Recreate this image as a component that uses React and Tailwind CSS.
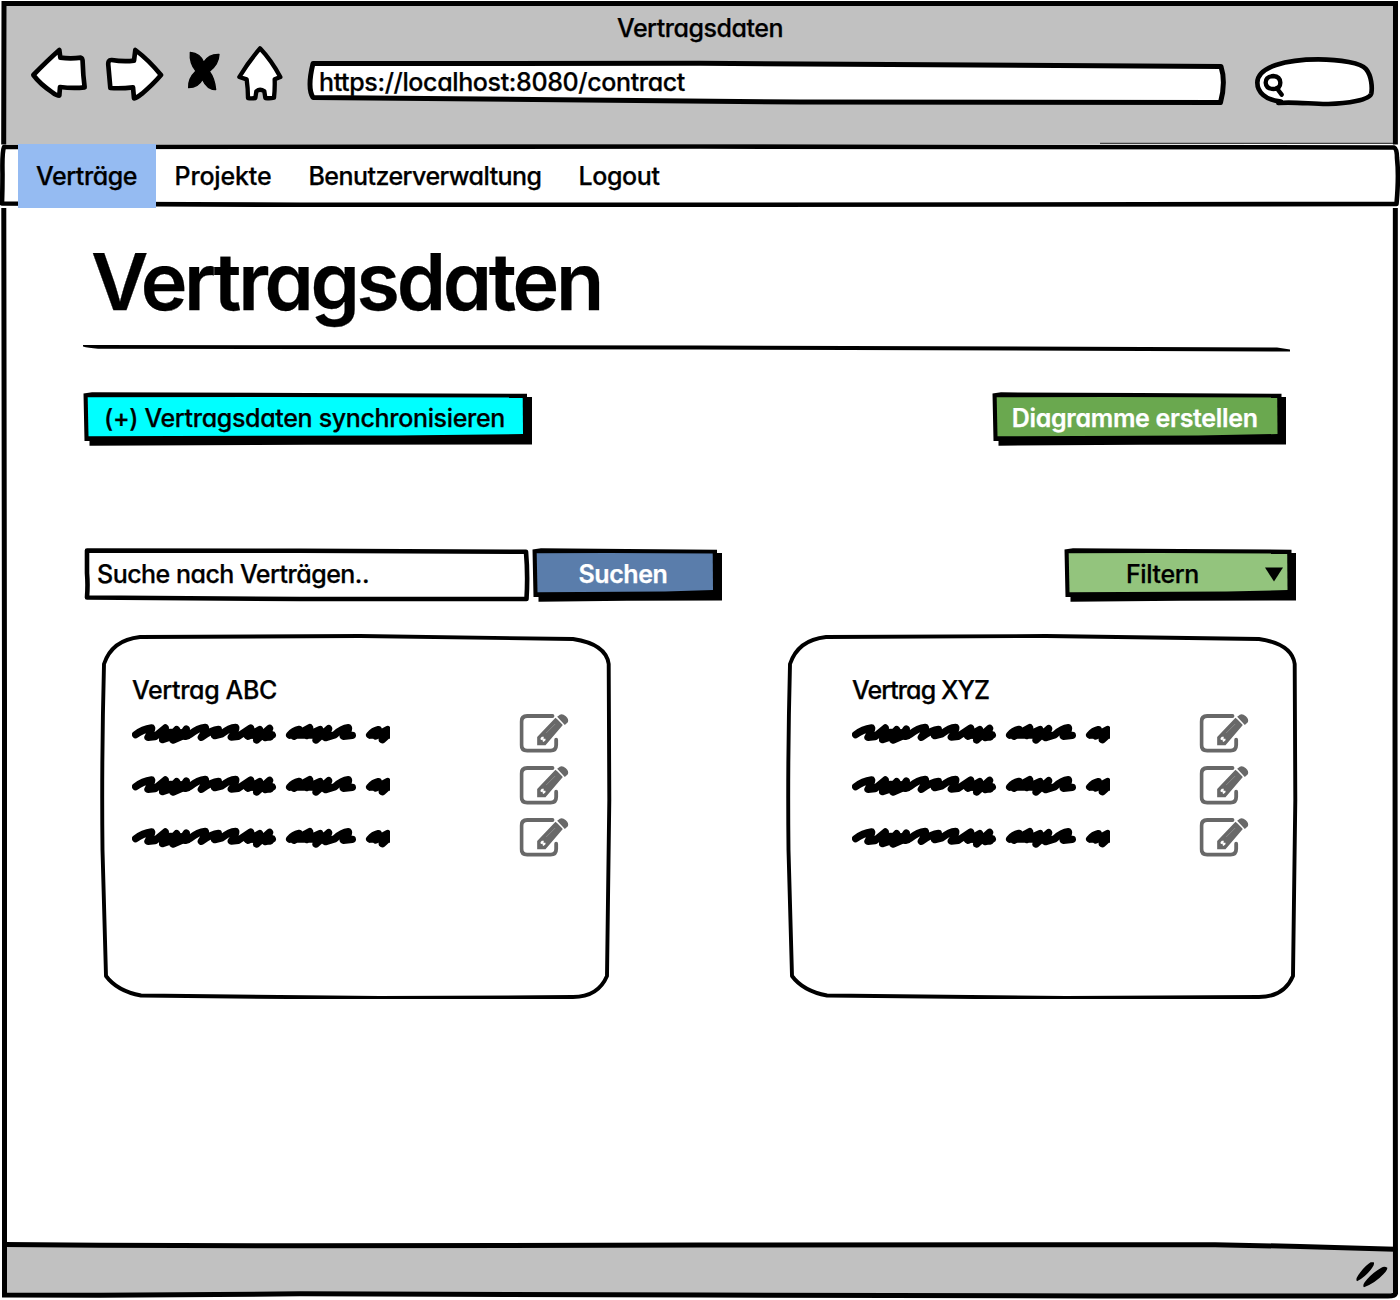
import { useLayoutEffect, useRef, useState } from "react";

/* Text whose tracking is computed so that it spans a given width. */
function Label({ width, className = "", children }) {
  const ref = useRef(null);
  const [tracking, setTracking] = useState(0);
  useLayoutEffect(() => {
    const natural = ref.current.getBoundingClientRect().width;
    setTracking((width - natural) / children.length);
  }, []);
  return (
    <span
      ref={ref}
      className={`inline-block whitespace-pre ${className}`}
      style={{ letterSpacing: `${tracking}px` }}
    >
      {children}
    </span>
  );
}

const ink = { fill: "none", stroke: "#000", strokeLinejoin: "round", strokeLinecap: "round" };

function WindowFrame() {
  return (
    <svg className="absolute inset-0 h-full w-full" viewBox="0 0 1400 1300">
      <path d="M4 3.5H1395V1295L1100 1295.5L700 1294.5L300 1293.5L100 1295.5L4.500 1295.500Z" fill="#fff" />
      <path d="M4 3.5H1395V144H4Z" fill="#c1c1c1" />
      <path d="M5 1244.500L300 1246L700 1245L1200 1244.500L1395 1249V1295H5Z" fill="#c1c1c1" />
      <path d="M4 3.500H1395.500L1395 700L1395.500 1293.500Q1395 1296 1388 1296L1100 1296L700 1295L300 1293.800L100 1295.300L4.500 1295L4.500 700L3.700 140Z" {...ink} strokeWidth="5" strokeLinejoin="miter" />
      <path d="M5 1244.500L100 1245.300L300 1245.800L700 1245L1215 1244.700L1300 1246.500L1395 1249.300" {...ink} strokeWidth="5" />
      <path d="M1100 143.300H1393" stroke="#222" />
    </svg>
  );
}

function NavFrame() {
  return (
    <svg className="absolute inset-0 h-full w-full" viewBox="0 0 1400 64">
      <path d="M0 0.500H1400V64H0Z" fill="#fff" />
      <path d="M4 3L700 2.500L1394 3.500Q1397 5 1397 14Q1399 32 1396.500 60L700 60.800L300 60.800L2 59.500Q2.500 45 2.500 30Q2 8 4 3Z" {...ink} strokeWidth="4.600" />
    </svg>
  );
}

function BackIcon() {
  return (
    <svg className="h-14 w-[58px]" viewBox="90 138 174 168">
      <path d="M100 225Q142 182 178 150L181 173Q212 177 243 173Q248 174 248 187Q249 225 254 262Q220 266 180 261L178 287Q170 287 157 277Q120 252 100 225Z" {...ink} fill="#fff" strokeWidth="14" />
    </svg>
  );
}

function ForwardIcon() {
  return (
    <svg className="h-14 w-[60px]" viewBox="312 138 180 168">
      <path d="M483 225Q446 180 406 150L402 182Q370 186 335 180Q323 179 325 196Q328 230 331 264Q364 266 399 262L402 295Q410 294 426 281Q460 252 483 225Z" {...ink} fill="#fff" strokeWidth="14" />
    </svg>
  );
}

function StopIcon() {
  return (
    <svg className="h-14 w-9" viewBox="558 138 108 168">
      <path d="M571 157Q601 160 611 187Q626 162 657 163Q656 194 628 214Q644 235 647 269Q622 270 607 238Q595 262 566 263Q564 236 588 213Q568 190 571 157Z" stroke="#000" strokeWidth="4" strokeLinejoin="round" />
    </svg>
  );
}

function HomeIcon() {
  return (
    <svg className="h-14 w-12" viewBox="708 138 144 168">
      <path d="M780 145Q814 181 841 231L824 238Q825 266 822 293Q810 296 796 294L793 274Q780 264 769 274L766 294Q755 296 744 294Q744 266 740 238L718 231Q745 186 780 145Z" {...ink} fill="#fff" strokeWidth="13" />
    </svg>
  );
}

function SearchPill() {
  return (
    <svg className="mt-2.5 h-[52px] w-[124px]" viewBox="219 168 372 156">
      <path d="M303 305C255 300 232 275 232 248C232 200 320 178 415 178C480 178 545 190 558 207C575 228 577 262 574 280C570 300 500 311 445 312C400 313 340 304 295 309" {...ink} fill="#fff" strokeWidth="14" />
      <path d="M280 228Q300 229 301 248Q301 266 281 267Q258 267 257 248Q257 229 280 228ZM290 264L305 284" {...ink} strokeWidth="13" />
    </svg>
  );
}

function SketchButton({ width, fill, className = "", children }) {
  const w = width;
  return (
    <button className={`relative flex h-[54px] items-center justify-center ${className}`}>
      <svg className="absolute inset-0 h-full w-full" viewBox={`0 0 ${w} 54`} preserveAspectRatio="none">
        <path d={`M0.500 1.500L9 0.300L${w * 0.5} 1L${w - 5} 1.700V5H${w}V52.500L${w * 0.5} 52.800L6.500 53.700V49H1.500Z`} />
        <path d={`M4.700 5.200L${w * 0.4} 5L${w - 9.300} 5.600L${w - 9} 42L${w * 0.7} 43.500L5.500 44.200Z`} fill={fill} />
      </svg>
      {children}
    </button>
  );
}

function Scribble() {
  return (
    <svg className="mt-[3px] h-[22px] w-[258px]" viewBox="126 310 774 66">
      <g {...ink} strokeWidth="22">
        <path d="M137 345Q158 329 185 325Q187 330 174 353L195 351L226 325L218 360L240 352L260 330L249 361L275 350L289 328L286 350L300 344Q324 325 346 323Q349 330 334 353Q365 330 385 329L374 348L395 343Q418 324 437 323Q440 331 424 352L445 350L482 325L474 350L509 330L500 361L539 326L526 354L547 346" />
        <path d="M215 348H292M470 345L540 352M485 338L535 342M240 338L285 340" />
        <path d="M599 346Q610 332 627 329L612 350L659 324L650 348L690 330L678 361L716 327L706 354L735 345Q755 326 775 324Q779 332 760 350L787 347M605 346H715M655 336L712 340" />
        <path d="M839 346Q850 333 865 330L857 349L892 330L877 360L910 330V348M845 346H900M865 338H900" />
      </g>
    </svg>
  );
}

function EditIcon() {
  return (
    <svg className="mt-0.5 h-10 w-[50px] translate-x-[0.5px]" viewBox="118 278 150 120">
      <path d="M217 287H141Q124 287 124 304V374Q124 391 141 391H211Q228 391 228 374V358" fill="none" stroke="#686868" strokeWidth="11.500" strokeLinecap="round" />
      <path d="M171 350L229 290L250 312L196 375H171ZM231 291L240 283Q248 279 257 288Q267 297 263 306L254 315Z" fill="#686868" stroke="#fff" strokeWidth="7" />
      <path d="M171 350L226 292L248 314L196 375H171ZM231 289L239 283Q247 279 257 288Q267 297 263 306L254 314Z" fill="#686868" />
      <path d="M198 338L225 311" stroke="#909090" strokeWidth="2.500" />
      <path d="M181 354L185 349L191 349L190 355L196 355L196 360L190 365L187 362L188 358L182 359Z" fill="#fff" />
    </svg>
  );
}

function ContractCard({ title, titleWidth, className }) {
  return (
    <article className="relative h-[366px] w-[512px]">
      <svg className="absolute inset-0 h-full w-full" viewBox="100 633 512 366">
        <path d="M104 664Q112 640 140 637L360 636L573 639Q606 644 608.700 664L609.300 800L607 976Q598 997 573 997L380 998L141 995.500Q117 991 106 976L102.500 850Q101.500 760 104 664Z" {...ink} strokeWidth="3.900" />
      </svg>
      <div className={`relative pt-[39px] ${className}`}>
        <h2 className="flex h-9 items-center">
          <Label width={titleWidth}>{title}</Label>
        </h2>
        <ul className="mt-1 flex flex-col gap-3">
          {[0, 1, 2].map((row) => (
            <li key={row} className="flex h-10 items-center justify-between">
              <Scribble />
              <EditIcon />
            </li>
          ))}
        </ul>
      </div>
    </article>
  );
}

export default function App() {
  return (
    <div className="relative flex h-[1300px] w-[1400px] flex-col overflow-hidden bg-white font-['Inter',sans-serif] text-[25px] leading-9 font-medium text-black [-webkit-text-stroke:0.25px_currentColor] [font-feature-settings:'cv11']">
      <WindowFrame />

      <header className="relative h-36">
        <div className="flex h-[46px] items-start justify-center pt-[10px]">
          <Label width={166}>Vertragsdaten</Label>
        </div>
        <div className="flex items-start pl-[30px]">
          <BackIcon />
          <span className="ml-4 flex"><ForwardIcon /></span>
          <span className="ml-[22px] flex"><StopIcon /></span>
          <span className="ml-3.5 flex"><HomeIcon /></span>
          <div className="relative ml-[22px] mt-3.5 flex h-[46px] w-[921px] items-center pl-[13px] pb-0.5">
            <svg className="absolute inset-0 h-full w-full" viewBox="306 60 921 46">
              <path d="M313 63.500L700 63.300L1221 66.500Q1226 82 1220.500 102.500L800 102L313 97.500Q307 88 313 63.500Z" {...ink} fill="#fff" strokeWidth="5" />
            </svg>
            <span className="relative flex"><Label width={366}>https://localhost:8080/contract</Label></span>
          </div>
          <span className="ml-[26px] flex"><SearchPill /></span>
        </div>
      </header>

      <nav className="relative flex h-16 pl-[18px]">
        <NavFrame />
        <a className="relative flex w-[138px] items-center justify-center bg-[#95bbf2] pr-px"><Label width={101}>Verträge</Label></a>
        <a className="relative flex w-[134px] items-center justify-center"><Label width={97}>Projekte</Label></a>
        <a className="relative flex w-[270px] items-center justify-center"><Label width={233}>Benutzerverwaltung</Label></a>
        <a className="relative flex w-[118px] items-center justify-center"><Label width={81}>Logout</Label></a>
      </nav>

      <main className="relative h-[1036px]">
        <h1 className="flex h-[136px] items-center pl-[91px] pt-[11px] text-[79px] leading-none font-semibold [font-optical-sizing:none]">
          <Label width={510}>Vertragsdaten</Label>
        </h1>
        <svg className="ml-[82px] h-2 w-[1210px]" viewBox="82 344 1210 8">
          <path d="M83 345L96 345L700 345.500L1277 347.500L1290 349.500V351.500L700 349.500L98 348.700Q88 348 83 346.500Z" />
        </svg>

        <div className="mt-10 flex justify-between pl-[83px] pr-[114px]">
          <SketchButton width={449} fill="#00ffff" className="w-[449px] pb-0.5 pr-1.5">
            <span className="relative flex"><Label width={401}>(+) Vertragsdaten synchronisieren</Label></span>
          </SketchButton>
          <SketchButton width={294.5} fill="#6aa84f" className="w-[294.5px] pb-0.5 pr-2 font-semibold text-white">
            <span className="relative flex"><Label width={246}>Diagramme erstellen</Label></span>
          </SketchButton>
        </div>

        <div className="mt-[102px] flex justify-between pl-[84px] pr-[104px]">
          <div className="flex">
            <div className="relative flex h-[54px] w-[446px] items-center pb-0.5 pl-[13px]">
              <svg className="absolute inset-0 h-full w-full" viewBox="84 548 446 54">
                <path d="M87 550.500L300 550.800L526 551.800Q528 575 526.500 599L300 599L87 597.500Q88 585 87 573Z" {...ink} fill="#fff" strokeWidth="4.600" />
              </svg>
              <span className="relative flex"><Label width={272}>Suche nach Verträgen..</Label></span>
            </div>
            <SketchButton width={190} fill="#5a7dab" className="ml-[2px] w-[190px] pb-0.5 pr-2 font-semibold text-white">
              <span className="relative flex"><Label width={89}>Suchen</Label></span>
            </SketchButton>
          </div>
          <SketchButton width={232.5} fill="#93c47d" className="w-[232.5px] pb-0.5">
            <span className="relative flex w-full items-center justify-end pr-3">
              <Label width={73}>Filtern</Label>
              <svg className="ml-[65px] h-[15px] w-5" viewBox="0 0 20 15"><path d="M1 0.500H19L10 14.500Z" /></svg>
            </span>
          </SketchButton>
        </div>

        <div className="mt-[31px] flex gap-[174px] pl-[100px]">
          <ContractCard title="Vertrag ABC" titleWidth={145} className="pl-8 pr-[43px]" />
          <ContractCard title="Vertrag XYZ" titleWidth={137} className="pl-[66px] pr-[49px]" />
        </div>
      </main>

      <footer className="relative flex h-14 justify-end pr-3 pt-[17px]">
        <svg className="h-[27px] w-8" viewBox="530 123 96 81">
          <path d="M583 127Q587 132 578 144Q560 170 533 184Q528 178 537 165Q557 137 574 127ZM624 143Q625 150 612 163Q588 189 554 202Q549 197 556 187Q574 162 606 143Q615 138 624 143Z" />
        </svg>
      </footer>
    </div>
  );
}
